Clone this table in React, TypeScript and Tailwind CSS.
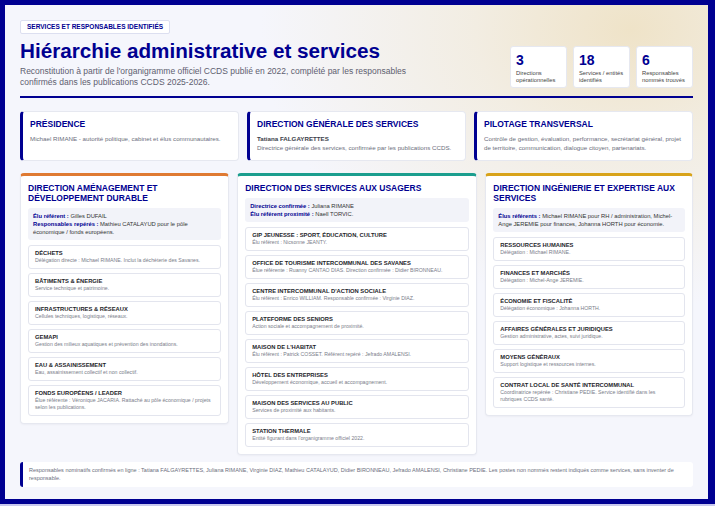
import React from "react";

type Item = { t: string; d: string };

const col1: Item[] = [
  { t: "DÉCHETS", d: "Délégation directe : Michael RIMANE. Inclut la déchèterie des Savanes." },
  { t: "BÂTIMENTS & ÉNERGIE", d: "Service technique et patrimoine." },
  { t: "INFRASTRUCTURES & RÉSEAUX", d: "Cellules techniques, logistique, réseaux." },
  { t: "GEMAPI", d: "Gestion des milieux aquatiques et prévention des inondations." },
  { t: "EAU & ASSAINISSEMENT", d: "Eau, assainissement collectif et non collectif." },
  { t: "FONDS EUROPÉENS / LEADER", d: "Élue référente : Véronique JACARIA. Rattaché au pôle économique / projets selon les publications." },
];

const col2: Item[] = [
  { t: "GIP JEUNESSE : SPORT, ÉDUCATION, CULTURE", d: "Élu référent : Nicsonne JEANTY." },
  { t: "OFFICE DE TOURISME INTERCOMMUNAL DES SAVANES", d: "Élue référente : Ruanny CANTAO DIAS. Direction confirmée : Didier BIRONNEAU." },
  { t: "CENTRE INTERCOMMUNAL D'ACTION SOCIALE", d: "Élu référent : Enrico WILLIAM. Responsable confirmée : Virginie DIAZ." },
  { t: "PLATEFORME DES SENIORS", d: "Action sociale et accompagnement de proximité." },
  { t: "MAISON DE L'HABITAT", d: "Élu référent : Patrick COSSET. Référent repéré : Jefrado AMALENSI." },
  { t: "HÔTEL DES ENTREPRISES", d: "Développement économique, accueil et accompagnement." },
  { t: "MAISON DES SERVICES AU PUBLIC", d: "Services de proximité aux habitants." },
  { t: "STATION THERMALE", d: "Entité figurant dans l'organigramme officiel 2022." },
];

const col3: Item[] = [
  { t: "RESSOURCES HUMAINES", d: "Délégation : Michael RIMANE." },
  { t: "FINANCES ET MARCHÉS", d: "Délégation : Michel-Ange JEREMIE." },
  { t: "ÉCONOMIE ET FISCALITÉ", d: "Délégation économique : Johanna HORTH." },
  { t: "AFFAIRES GÉNÉRALES ET JURIDIQUES", d: "Gestion administrative, actes, suivi juridique." },
  { t: "MOYENS GÉNÉRAUX", d: "Support logistique et ressources internes." },
  { t: "CONTRAT LOCAL DE SANTÉ INTERCOMMUNAL", d: "Coordinatrice repérée : Christiane PEDIE. Service identifié dans les rubriques CCDS santé." },
];

function ItemBox({ it }: { it: Item }) {
  return (
    <div className="rounded-[3px] border border-[#e3e5ee] bg-white px-[6px] pt-[4px] pb-[4px]">
      <div className="text-[5.8px] font-bold leading-[7px] text-[#1e1e2a]">{it.t}</div>
      <div className="text-[5.2px] leading-[7px] text-[#7a7d8a]">{it.d}</div>
    </div>
  );
}

function Column({
  color,
  title,
  info,
  items,
}: {
  color: string;
  title: string;
  info: React.ReactNode;
  items: Item[];
}) {
  return (
    <div className={`rounded-[4px] border border-[#e6e8f0] border-t-[3px] ${color} bg-white px-[7px] pt-[7px] pb-[7px] shadow-[0_1px_2px_rgba(0,0,40,0.04)]`}>
      <h2 className="text-[8.5px] font-bold leading-[10px] text-[#000091]">{title}</h2>
      <div className="mt-[5px] rounded-[3px] bg-[#f2f3f9] px-[5px] py-[4px] text-[5.8px] leading-[8px] text-[#333]">
        {info}
      </div>
      <div className="mt-[5px] flex flex-col gap-[4px]">
        {items.map((it) => (
          <ItemBox key={it.t} it={it} />
        ))}
      </div>
    </div>
  );
}

function L({ children }: { children: React.ReactNode }) {
  return <b className="font-bold text-[#000091]">{children}</b>;
}

export default function App() {
  return (
    <div className="h-[506px] w-[715px] bg-[#c8c8ee] font-['Liberation_Sans',Arial,sans-serif]">
      <div className="h-[504px] w-[715px] border-[5px] border-r-[7px] border-[#000091] bg-[#f5f6fc] bg-[radial-gradient(ellipse_at_89%_5%,#efe3c8_0%,rgba(240,230,206,0.55)_18%,rgba(245,246,252,0)_42%)]">
        <div className="px-[15px] pt-[15px]">
          {/* Header */}
          <div className="flex items-end justify-between border-b-2 border-[#000091] pb-[8px]">
            <div className="flex flex-col items-start">
              <div className="rounded-[2px] border border-[#dcdff0] bg-white px-[6px] py-[2px] text-[6.5px] font-bold leading-[8px] text-[#000091]">
                SERVICES ET RESPONSABLES IDENTIFIÉS
              </div>
              <h1 className="mt-[5px] text-[20.7px] font-bold leading-[24px] text-[#000091]">
                Hiérarchie administrative et services
              </h1>
              <p className="mt-[2.5px] text-[8.5px] leading-[11px] text-[#5e6070]">
                Reconstitution à partir de l'organigramme officiel CCDS publié en 2022, complété par les responsables
                <br />
                confirmés dans les publications CCDS 2025-2026.
              </p>
            </div>
            <div className="flex gap-[6px]">
              {[
                ["3", "Directions", "opérationnelles"],
                ["18", "Services / entités", "identifiés"],
                ["6", "Responsables", "nommés trouvés"],
              ].map(([n, a, b]) => (
                <div key={n} className="h-[42px] w-[57px] rounded-[3px] border border-[#e6e8f0] bg-white px-[5px] pt-[6px]">
                  <div className="text-[14px] font-bold leading-[14px] text-[#000091]">{n}</div>
                  <div className="mt-[3px] text-[5.8px] leading-[7px] text-[#444]">
                    {a}
                    <br />
                    {b}
                  </div>
                </div>
              ))}
            </div>
          </div>

          {/* Top row */}
          <div className="mt-[13px] grid grid-cols-3 gap-[8px]">
            <div className="h-[50px] rounded-[4px] border border-[#e6e8f0] border-l-[3px] border-l-[#000091] bg-white px-[7px] pt-[7px]">
              <div className="text-[8.5px] font-bold leading-[10px] text-[#000091]">PRÉSIDENCE</div>
              <div className="mt-[5px] text-[6.2px] leading-[9px] text-[#6b6e7c]">
                Michael RIMANE - autorité politique, cabinet et élus communautaires.
              </div>
            </div>
            <div className="h-[50px] rounded-[4px] border border-[#e6e8f0] border-l-[3px] border-l-[#000091] bg-white px-[7px] pt-[7px]">
              <div className="text-[8.5px] font-bold leading-[10px] text-[#000091]">DIRECTION GÉNÉRALE DES SERVICES</div>
              <div className="mt-[5px] text-[6.2px] font-bold leading-[9px] text-[#3c3e4a]">Tatiana FALGAYRETTES</div>
              <div className="text-[6.2px] leading-[9px] text-[#6b6e7c]">
                Directrice générale des services, confirmée par les publications CCDS.
              </div>
            </div>
            <div className="h-[50px] rounded-[4px] border border-[#e6e8f0] border-l-[3px] border-l-[#000091] bg-white px-[7px] pt-[7px]">
              <div className="text-[8.5px] font-bold leading-[10px] text-[#000091]">PILOTAGE TRANSVERSAL</div>
              <div className="mt-[5px] text-[6.2px] leading-[9px] text-[#6b6e7c]">
                Contrôle de gestion, évaluation, performance, secrétariat général, projet de territoire, communication, dialogue citoyen, partenariats.
              </div>
            </div>
          </div>

          {/* Columns */}
          <div className="mt-[12px] grid grid-cols-[209fr_240fr_208fr] items-start gap-[8.5px]">
            <Column
              color="border-t-[#df7a32]"
              title="DIRECTION AMÉNAGEMENT ET DÉVELOPPEMENT DURABLE"
              info={
                <>
                  <L>Élu référent :</L> Gilles DUFAIL
                  <br />
                  <L>Responsables repérés :</L> Mathieu CATALAYUD pour le pôle économique / fonds européens.
                </>
              }
              items={col1}
            />
            <Column
              color="border-t-[#1b9e8e]"
              title="DIRECTION DES SERVICES AUX USAGERS"
              info={
                <>
                  <L>Directrice confirmée :</L> Juliana RIMANE
                  <br />
                  <L>Élu référent proximité :</L> Naell TORVIC.
                </>
              }
              items={col2}
            />
            <Column
              color="border-t-[#d8a31a]"
              title="DIRECTION INGÉNIERIE ET EXPERTISE AUX SERVICES"
              info={
                <>
                  <L>Élus référents :</L> Michael RIMANE pour RH / administration, Michel-Ange JEREMIE pour finances, Johanna HORTH pour économie.
                </>
              }
              items={col3}
            />
          </div>

          {/* Footer */}
          <div className="mt-[7px] rounded-[3px] border-l-[3px] border-[#000091] bg-white py-[4.5px] pr-[10px] pl-[6px] text-[5.5px] leading-[8px] text-[#6b6e7c]">
            Responsables nominatifs confirmés en ligne : Tatiana FALGAYRETTES, Juliana RIMANE, Virginie DIAZ, Mathieu CATALAYUD, Didier BIRONNEAU, Jefrado AMALENSI, Christiane PEDIE. Les postes non nommés restent indiqués comme services, sans inventer de responsable.
          </div>
        </div>
      </div>
    </div>
  );
}
